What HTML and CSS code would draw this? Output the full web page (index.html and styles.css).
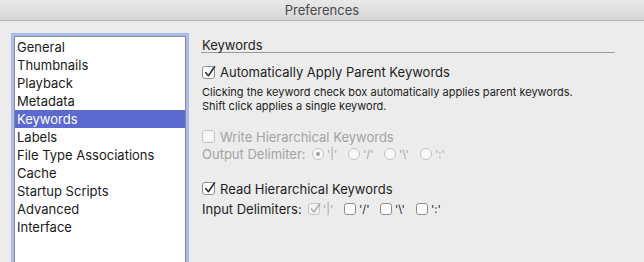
FILE: index.html
```html
<!DOCTYPE html>
<html>
<head>
<meta charset="utf-8">
<link rel="stylesheet" href="styles.css">
</head>
<body>
<div class="window">
  <div class="titlebar">Preferences</div>
  <div class="content">
    <ul class="list">
      <li>General</li>
      <li>Thumbnails</li>
      <li>Playback</li>
      <li>Metadata</li>
      <li class="selected">Keywords</li>
      <li>Labels</li>
      <li>File Type Associations</li>
      <li>Cache</li>
      <li>Startup Scripts</li>
      <li>Advanced</li>
      <li>Interface</li>
    </ul>
    <div class="panel">
      <div class="section-title">Keywords</div>
      <div class="row row-auto">
        <span class="cb checked"><svg viewBox="0 0 13 13"><path d="M2.6 6.6 L5.4 9.8 L11.6 0.8"/></svg></span>
        <span>Automatically Apply Parent Keywords</span>
      </div>
      <p class="desc">Clicking the keyword check box automatically applies parent keywords.<br>Shift click applies a single keyword.</p>
      <div class="row row-write disabled">
        <span class="cb"></span>
        <span>Write Hierarchical Keywords</span>
      </div>
      <div class="row row-output disabled">
        <span class="row-label label-output">Output Delimiter:</span>
        <span class="opt"><span class="radio on"></span><span class="opt-text">'|'</span></span>
        <span class="opt"><span class="radio"></span><span class="opt-text">'/'</span></span>
        <span class="opt"><span class="radio"></span><span class="opt-text">'\'</span></span>
        <span class="opt"><span class="radio"></span><span class="opt-text">':'</span></span>
      </div>
      <div class="row row-read">
        <span class="cb checked"><svg viewBox="0 0 13 13"><path d="M2.6 6.6 L5.4 9.8 L11.6 0.8"/></svg></span>
        <span>Read Hierarchical Keywords</span>
      </div>
      <div class="row row-input">
        <span class="row-label label-input">Input Delimiters:</span>
        <span class="opt opt-disabled"><span class="cb small checked"><svg viewBox="0 0 13 13"><path d="M2.6 6.6 L5.4 9.8 L11.6 0.8"/></svg></span><span class="opt-text">'|'</span></span>
        <span class="opt"><span class="cb small"></span><span class="opt-text">'/'</span></span>
        <span class="opt"><span class="cb small"></span><span class="opt-text">'\'</span></span>
        <span class="opt"><span class="cb small"></span><span class="opt-text">':'</span></span>
      </div>
    </div>
  </div>
</div>
</body>
</html>
```

FILE: styles.css
```css
* { box-sizing: border-box; }
html, body {
  margin: 0;
  padding: 0;
  width: 644px;
  height: 262px;
  overflow: hidden;
  background: #ececec;
  font-family: "Inter", "Liberation Sans", Arial, sans-serif;
  color: #222;
}
.window {
  width: 644px;
  height: 262px;
  overflow: hidden;
  background: #ececec;
}
.titlebar {
  height: 21px;
  line-height: 20px;
  text-align: center;
  font-size: 13px;
  color: #4b4b4b;
  background: linear-gradient(#e9e9e9, #d5d5d5);
  border-bottom: 1px solid #b3b3b3;
}
.content {
  display: flex;
  align-items: flex-start;
  padding: 15px 29px 0 14px;
}
.list {
  list-style: none;
  margin: 0;
  padding: 1px 0 0 0;
  width: 172px;
  height: 226px;
  flex: none;
  background: #fff;
  border: 1px solid #8d8d8d;
  border-bottom: none;
  box-shadow: 0 0 0 3px #a9bcf0;
  font-size: 13px;
  color: #1a1a1a;
}
.list li {
  height: 18px;
  line-height: 18px;
  padding-left: 2px;
  white-space: nowrap;
}
.list li.selected {
  background: #5b69d0;
  color: #fff;
}
.panel {
  flex: 1;
  margin-left: 15px;
  display: flex;
  flex-direction: column;
  font-size: 13px;
}
.section-title {
  margin-top: 2px;
  line-height: 14px;
  height: 15px;
  padding-left: 1px;
  border-bottom: 1px solid #9a9a9a;
}
.row {
  display: flex;
  align-items: center;
  height: 17px;
  white-space: nowrap;
  color: #1e1e1e;
}
.row-auto { margin-top: 10px; height: 18px; }
.row-write { margin-top: 15px; }
.row-output { margin-top: 0; }
.row-read { margin-top: 18px; }
.row-input { margin-top: 3px; }
.row.disabled { color: #a3a3a3; }
.desc {
  margin: 4px 0 0 1px;
  font-size: 11px;
  line-height: 14px;
  color: #222;
}
.cb {
  position: relative;
  flex: none;
  width: 13px;
  height: 13px;
  margin: 0 5px 0 1px;
  background: #fff;
  border: 1px solid #8e8e8e;
  border-radius: 3px;
}
.cb svg {
  position: absolute;
  left: 0;
  top: -1px;
  width: 13px;
  height: 13px;
  overflow: visible;
}
.cb svg path {
  fill: none;
  stroke: #2a2a2a;
  stroke-width: 1.5;
  stroke-linecap: round;
  stroke-linejoin: round;
}
.disabled .cb {
  border-color: #c6c6c6;
  background: #f6f6f6;
}
.cb.small {
  width: 12px;
  height: 12px;
  margin: 0 3px 0 0;
}
.cb.small svg { width: 12px; height: 12px; }
.opt-disabled .cb {
  border-color: #c4c4c4;
  background: #f3f3f3;
}
.opt-disabled .cb svg path { stroke: #a8a8a8; }
.opt-disabled .opt-text { color: #a3a3a3; }
.row-label { flex: none; padding-left: 1px; }
.label-output { width: 111px; }
.label-input { width: 107px; }
.opt {
  display: inline-flex;
  align-items: center;
  width: 36px;
  flex: none;
}
.opt-text {
  font-size: 11px;
  margin-left: 0;
}
.radio {
  position: relative;
  flex: none;
  width: 12px;
  height: 12px;
  margin-right: 3px;
  border-radius: 50%;
  border: 1px solid #c3c3c3;
  background: #f8f8f8;
}
.radio.on::after {
  content: "";
  position: absolute;
  left: 3px;
  top: 3px;
  width: 4px;
  height: 4px;
  border-radius: 50%;
  background: #9d9d9d;
}
```
